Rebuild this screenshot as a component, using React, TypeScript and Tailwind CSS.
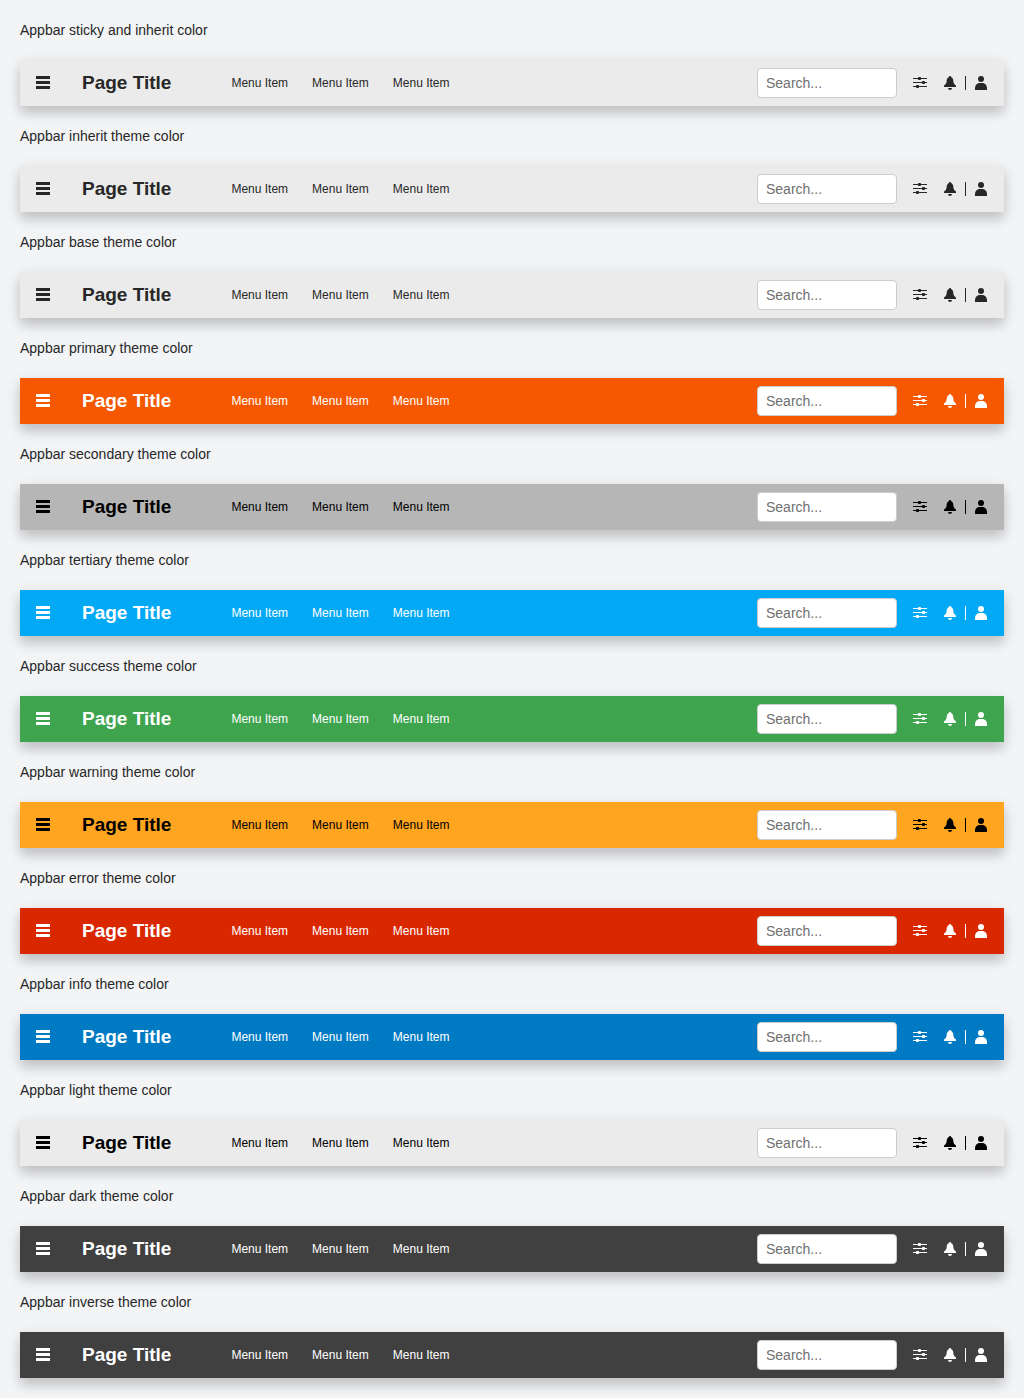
const bars = [
  { name: 'sticky and inherit color', style: 'bg-[#ebebeb] text-[#272727]' },
  { name: 'inherit theme color', style: 'bg-[#ebebeb] text-[#272727]' },
  { name: 'base theme color', style: 'bg-[#ebebeb] text-[#272727]' },
  { name: 'primary theme color', style: 'bg-[#f55800] text-white' },
  { name: 'secondary theme color', style: 'bg-[#b6b6b6] text-black' },
  { name: 'tertiary theme color', style: 'bg-[#03a9f4] text-white' },
  { name: 'success theme color', style: 'bg-[#3ea44e] text-white' },
  { name: 'warning theme color', style: 'bg-[#ffa520] text-black' },
  { name: 'error theme color', style: 'bg-[#d92800] text-white' },
  { name: 'info theme color', style: 'bg-[#007bc3] text-white' },
  { name: 'light theme color', style: 'bg-[#ebebeb] text-black' },
  { name: 'dark theme color', style: 'bg-[#404040] text-white' },
  { name: 'inverse theme color', style: 'bg-[#404040] text-white' },
];

function MenuIcon() {
  return (
    <svg className="size-[14px] shrink-0" viewBox="0 0 14 14" fill="currentColor">
      <path d="M0 0h14v3H0zM0 5h14v3H0zM0 10h14v3H0z" />
    </svg>
  );
}

function SlidersIcon() {
  return (
    <svg className="size-[14px] shrink-0" viewBox="0 0 14 14" fill="currentColor">
      <path d="M0 2h14v1H0zM0 6h14v1H0zM0 10h14v1H0z" />
      <rect x="5" y="1" width="3" height="3" rx="0.8" />
      <rect x="9" y="5" width="3" height="3" rx="0.8" />
      <rect x="3" y="9" width="3" height="3" rx="0.8" />
    </svg>
  );
}

function BellIcon() {
  return (
    <svg className="size-[14px] shrink-0" viewBox="0 0 14 14" fill="currentColor">
      <path d="M7 0C6.400 0 6 .4 6 1C4.500 1.500 3.800 3 3.700 4.500C3.600 6.500 3.300 7.500 2.500 8.200C1.800 8.800 1 9.200 1 10v1h12v-1c0-.8-.8-1.200-1.500-1.800C10.700 7.500 10.400 6.500 10.300 4.500C10.200 3 9.500 1.500 8 1C8 .4 7.600 0 7 0zM5 12h4c0 1.100-.9 2-2 2s-2-.9-2-2z" />
    </svg>
  );
}

function UserIcon() {
  return (
    <svg className="size-[14px] shrink-0" viewBox="0 0 14 14" fill="currentColor">
      <circle cx="7" cy="3" r="3" />
      <path d="M4.800 7h4.400C11.400 7.600 13 9.700 13 12v2H1v-2c0-2.300 1.600-4.400 3.800-5z" />
    </svg>
  );
}

function AppBar({ style }: { style: string }) {
  return (
    <header
      className={`flex h-[46px] items-center px-4 shadow-[0_8px_10px_rgba(0,0,0,0.12),0_4px_16px_rgba(0,0,0,0.12)] ${style}`}
    >
      <MenuIcon />
      <h1 className="ml-8 w-[149.4px] text-[19px] leading-[22px] font-bold">Page Title</h1>
      <ul className="flex gap-6 text-[12px] leading-[18px]">
        <li>Menu Item</li>
        <li>Menu Item</li>
        <li>Menu Item</li>
      </ul>
      <input
        className="ml-auto h-[30px] w-[140px] rounded-[4px] border border-[#cccccc] bg-white px-2 text-[14px] text-[#272727] placeholder:text-[#6f6f6f]"
        placeholder="Search..."
      />
      <div className="ml-4 flex items-center">
        <SlidersIcon />
        <span className="ml-4 flex">
          <BellIcon />
        </span>
        <span className="mr-[8px] ml-[8px] h-[14px] w-px bg-current" />
        <UserIcon />
      </div>
    </header>
  );
}

export default function App() {
  return (
    <main className="flex h-[1398px] flex-col gap-5 overflow-hidden bg-[#f3f4f6] p-5 font-['Liberation_Sans',Arial,sans-serif] text-[14px] leading-5 text-[#272727]">
      {bars.map((bar) => (
        <section key={bar.name} className="flex flex-col gap-5">
          <p>Appbar {bar.name}</p>
          <AppBar style={bar.style} />
        </section>
      ))}
    </main>
  );
}
